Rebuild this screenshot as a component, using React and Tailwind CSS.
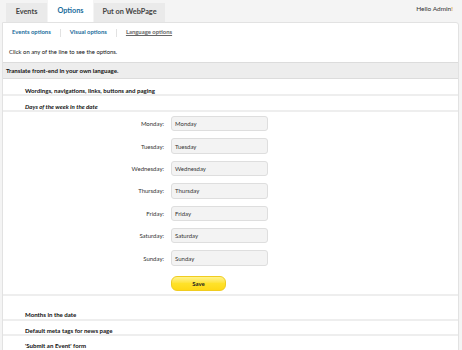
import React from 'react';

const days = ['Monday', 'Tuesday', 'Wednesday', 'Thursday', 'Friday', 'Saturday', 'Sunday'];

const tabs = [
  { label: 'Events', width: 'w-[41px]', active: false },
  { label: 'Options', width: 'w-[45px]', active: true },
  { label: 'Put on WebPage', width: 'w-[71px]', active: false }
];

const App = () => {
  return (
    <div className="w-[462px] h-[350px] overflow-hidden bg-[#f4f4f4] text-[#111] text-[6.1px] font-['Lato','Open_Sans',sans-serif]">
      {/* Top tabs */}
      <div className="h-[22px] flex items-end justify-between pl-[6px] pr-[9px]">
        <div className="flex items-end gap-[1px] h-full">
          {tabs.map(({ label, width, active }) => (
            <div
              key={label}
              className={`${width} flex items-center justify-center font-bold text-[7.3px] ${
                active ? 'h-[22px] bg-white text-[#1a6d9c]' : 'h-[19px] bg-[#eaeaea] text-[#444]'
              }`}
            >
              {label}
            </div>
          ))}
        </div>
        <div className="self-start mt-[4px] text-[6.5px] text-[#333]">
          Hello Admin<span className="text-[#e08a00]">!</span>
        </div>
      </div>

      {/* Panel */}
      <div className="ml-[2px] w-[457px] bg-white border border-[#e2e2e2] rounded-tr-[3px] h-[330px]">
        <div className="flex items-center h-[19px] pl-[9px] text-[5.9px] font-bold">
          <span className="text-[#1a6d9c]">Events options</span>
          <span className="mx-[9px] w-px h-[8px] bg-[#e2e2e2]" />
          <span className="text-[#1a6d9c]">Visual options</span>
          <span className="mx-[9px] w-px h-[8px] bg-[#e2e2e2]" />
          <span className="text-[#666] underline">Language options</span>
        </div>
        <div className="h-[20px] flex items-center pl-[6px] text-[5.9px]">Click on any of the line to see the options.</div>
        <div className="h-[17px] flex items-center pl-[3px] bg-[#ededed] border-y border-[#dcdcdc] font-bold">
          Translate front-end in your own language.
        </div>
        <div className="h-[17px] pt-[8px] leading-[8px] pl-[22px] font-bold border-b-2 border-[#eeeeee]">
          Wordings, navigations, links, buttons and paging
        </div>
        <div className="h-[16px] pt-[7px] leading-[8px] pl-[22px] font-bold italic border-b-2 border-[#eeeeee]">
          Days of the week in the date
        </div>

        {/* Form */}
        <div className="pt-[4px] pb-[3px] border-b-2 border-[#eeeeee]">
          <div className="flex flex-col gap-[7px]">
            {days.map((d) => (
              <div key={d} className="flex items-center h-[15.4px]">
                <div className="w-[161px] text-right text-[#333] text-[6px]">{d}:</div>
                <div className="ml-[7px] w-[97px] h-[15.4px] bg-[#f3f3f3] border border-[#dedede] rounded-[3px] flex items-center pl-[3px] text-[6px] text-[#333]">
                  {d}
                </div>
              </div>
            ))}
          </div>
          <div className="mt-[10px] pl-[168px]">
            <button className="w-[55px] h-[15px] rounded-[6px] bg-gradient-to-b from-[#fff38a] via-[#ffe22a] to-[#ffd814] border border-[#f0cc20] font-bold text-[6px] text-[#222]">
              Save
            </button>
          </div>
        </div>

        <div className="h-[25px] pt-[15px] leading-[8px] pl-[22px] font-bold border-b-2 border-[#eeeeee]">
          Months in the date
        </div>
        <div className="h-[15px] pt-[6px] leading-[8px] pl-[22px] font-bold border-b-2 border-[#eeeeee]">
          Default meta tags for news page
        </div>
        <div className="h-[15px] pt-[6px] leading-[8px] pl-[22px] font-bold">'Submit an Event' form</div>
      </div>
    </div>
  );
};

export default App;
